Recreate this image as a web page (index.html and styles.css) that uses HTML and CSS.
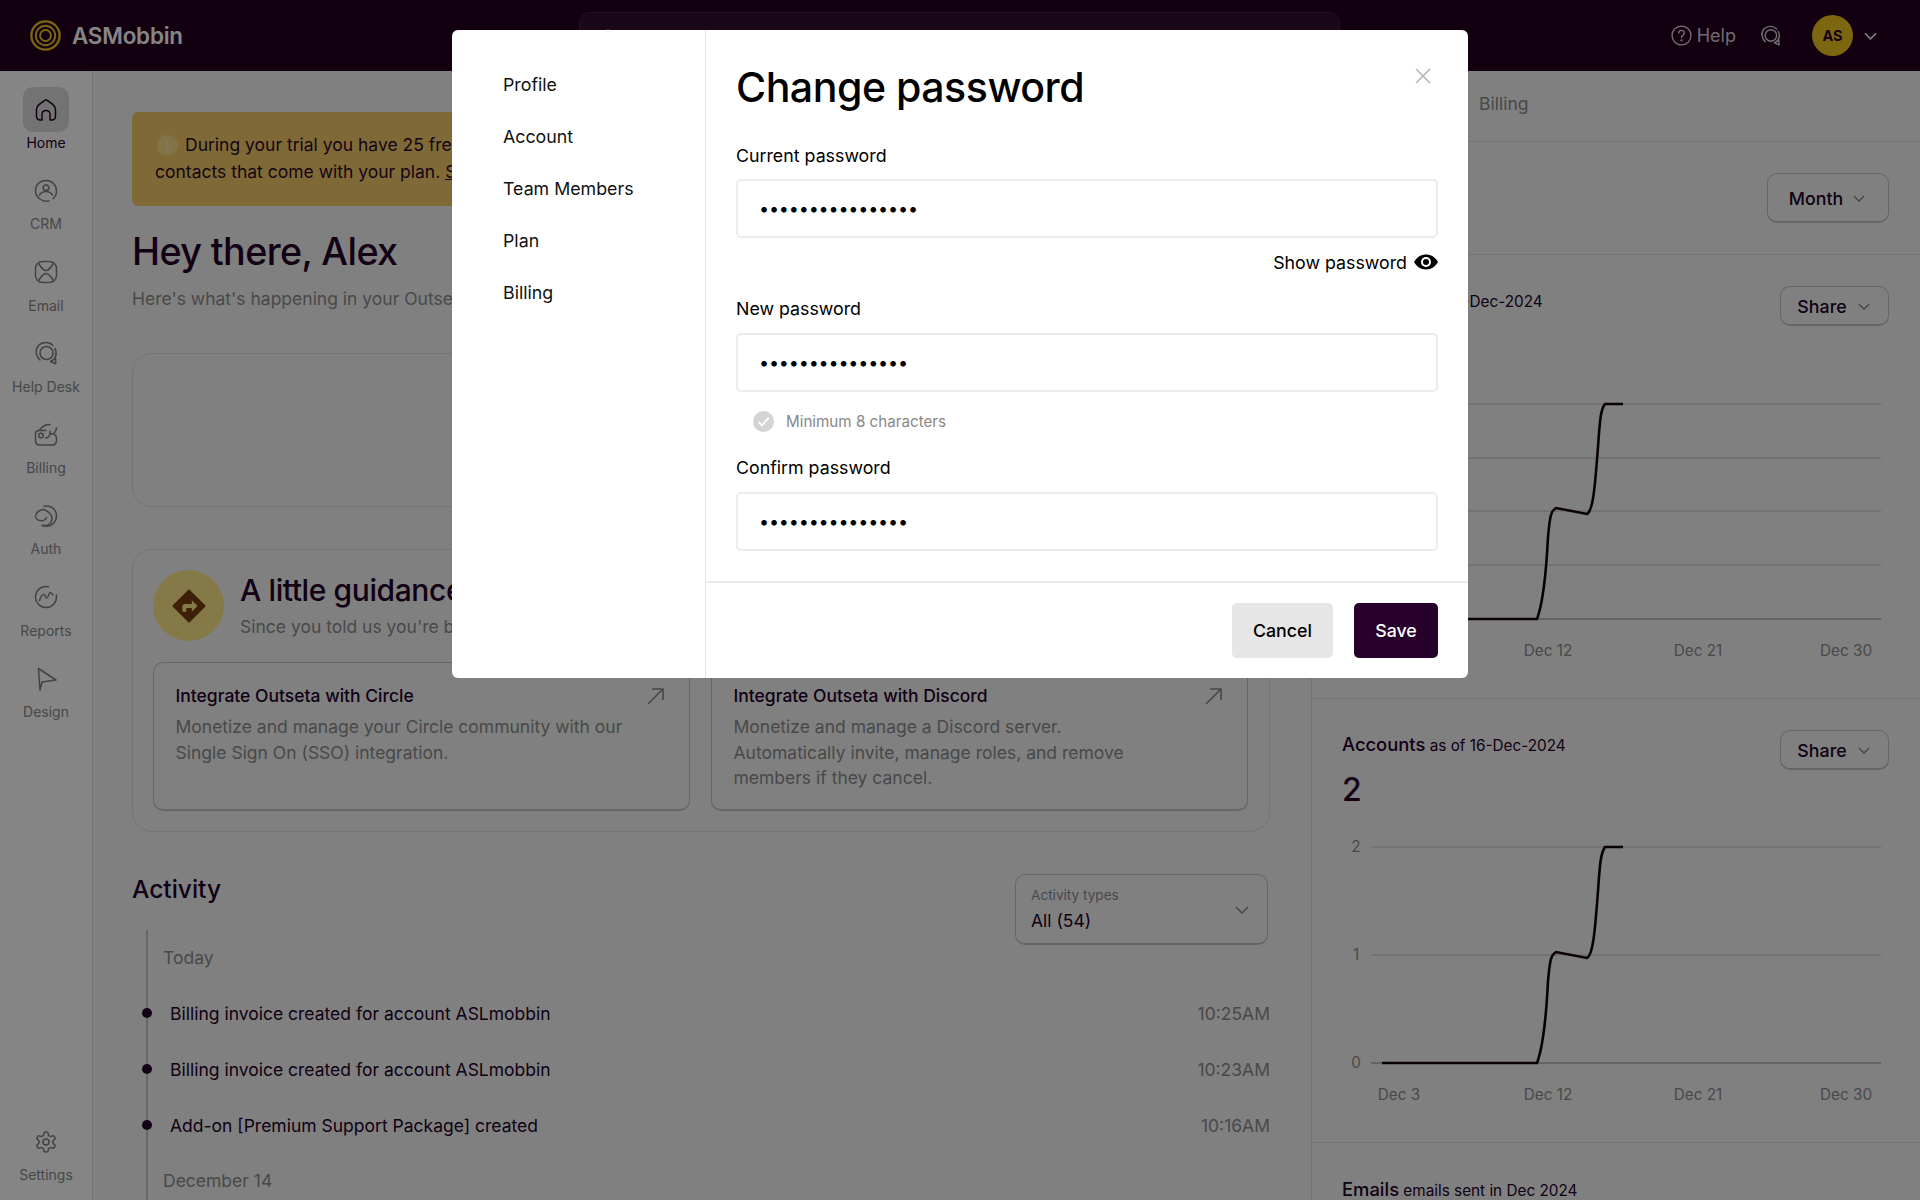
FILE: index.html
```html
<!DOCTYPE html>
<html lang="en">
<head>
<meta charset="utf-8">
<title>ASMobbin - Change password</title>
<link rel="stylesheet" href="styles.css">
</head>
<body>
<div class="app">
  <header class="topbar">
    <div class="brand">
      <svg class="logo" viewBox="0 0 32 32" fill="none" stroke="#f0c31f" stroke-width="2"><circle cx="16" cy="16" r="14.6" stroke-width="2.4"/><circle cx="16" cy="16" r="10"/><circle cx="16" cy="16" r="5.6"/></svg>
      <span class="brand-name">ASMobbin</span>
    </div>
    <div class="search"><svg class="search-icon" viewBox="0 0 24 24" fill="none" stroke="#999" stroke-width="2"><circle cx="11" cy="11" r="7"/><path d="M16 16l5 5"/></svg></div>
    <div class="top-actions">
      <svg class="top-icon" viewBox="0 0 24 24" fill="none" stroke="#fff" stroke-width="1.5"><circle cx="12" cy="12" r="10.8"/><path d="M8.800 9.300a3.200 3.200 0 0 1 6.400.2c0 2.200-3.200 2.500-3.200 4.800" stroke-linecap="round"/><circle cx="12" cy="17.500" r=".6"/></svg>
      <span class="help-text">Help</span>
      <svg class="top-icon chat" viewBox="0 0 24 24" fill="none" stroke="#fff" stroke-width="1.6" stroke-linecap="round" stroke-linejoin="round"><circle cx="12.500" cy="12" r="6.500"/><path d="M6 19C1.500 15 1 8.500 4.500 4.500C8.500 .5 15.500 .8 19 4.500"/><path d="M20.800 7.500C23.500 12 22 18.500 16.500 20.500L21.800 22.800L21.500 17.500"/></svg>
      <span class="avatar">AS</span>
      <svg class="top-chevron" viewBox="0 0 14 8" fill="none" stroke="#fff" stroke-width="1.700"><path d="M1 1l6 6 6-6"/></svg>
    </div>
  </header>

  <div class="workspace">
    <nav class="sidenav">
      <a class="nav-item active"><span class="nav-icon"><svg viewBox="0 0 24 24"><path d="M2.500 18V11.500C2.500 9.500 3.300 8 5 6.700L10 2.800C11.300 1.800 12.700 1.800 14 2.800L19 6.700C20.700 8 21.500 9.500 21.500 11.500V18C21.500 20.500 20 22 17.500 22H16V16.500C16 14 14.300 12.500 12 12.500S8 14 8 16.500V22H6.500C4 22 2.500 20.500 2.500 18Z"/></svg></span><span class="nav-label">Home</span></a>
      <a class="nav-item"><span class="nav-icon"><svg viewBox="0 0 24 24"><path d="M15 22C8.500 23.500 1.500 18.500 1.500 12S6 1.500 12 1.500 22.500 6 22.500 12c0 3-1.300 5.800-3.500 7.700"/><circle cx="12" cy="8.800" r="2.800"/><path d="M5.500 16c1.500-2.500 3.800-3.500 6.500-3.500s5 1 6.500 3.500"/></svg></span><span class="nav-label">CRM</span></a>
      <a class="nav-item"><span class="nav-icon"><svg viewBox="0 0 24 24"><rect x="1.500" y="1.500" width="21" height="21" rx="7"/><path d="M5 4C8 9 10 10.500 12 10.500S16 9 19 4"/><path d="M5 20C8 15 10 13.500 12 13.500S16 15 19 20"/></svg></span><span class="nav-label">Email</span></a>
      <a class="nav-item"><span class="nav-icon"><svg viewBox="0 0 24 24"><circle cx="12.500" cy="12" r="6.500"/><path d="M6 19C1.500 15 1 8.500 4.500 4.500C8.500 .5 15.500 .8 19 4.500"/><path d="M20.800 7.500C23.500 12 22 18.500 16.500 20.500L21.800 22.800L21.500 17.500"/></svg></span><span class="nav-label">Help Desk</span></a>
      <a class="nav-item"><span class="nav-icon"><svg viewBox="0 0 24 24"><path d="M1.500 11C1.500 9 3 7.500 5 7.500h7M20.500 11.500c1.300.7 2 1.800 2 3.500v2.500c0 3-1.800 4.500-4.500 4.500H6c-2.700 0-4.500-1.500-4.500-4.500V11"/><path d="M6 6.500C8.500 3 12 1.500 16 1.500M11.500 15c3.500 0 5-3.500 4.500-7-.3 2 1 3.800 2.500 3.200 2.200-.9 3.500-3.700 4-6.200"/><circle cx="7" cy="12.500" r="2.300"/></svg></span><span class="nav-label">Billing</span></a>
      <a class="nav-item"><span class="nav-icon"><svg viewBox="0 0 24 24"><path d="M10 2.300c6.500-1.800 12.500 3 12.500 9.500 0 6-4.500 10.500-10 10.500-1.700 0-3.200-.4-4.500-1 3.500.6 6 .1 7.800-1.500 2.500-2.300 3-6.300 1-9.300C15 8.500 12.800 6.500 10 5.500"/><path d="M10 5.500C5.500 5.500 1.500 9 1.500 12.300c0 2.500 2.800 4.500 5.800 4.500 2.700 0 4.200-1 5.200-3.300"/></svg></span><span class="nav-label">Auth</span></a>
      <a class="nav-item"><span class="nav-icon"><svg viewBox="0 0 24 24"><path d="M14.500 1.800A10.500 10.500 0 1 0 22.300 10"/><path d="M5.500 15.500C7 11 8.500 9.500 9.800 9.500c1.500 0 1.500 3.500 3 3.500s2-5.500 3.500-5.500c1 0 1.700 1 2.700 2.500"/></svg></span><span class="nav-label">Reports</span></a>
      <a class="nav-item"><span class="nav-icon"><svg viewBox="0 0 24 24"><path d="M4.500 1.500L22 13 8 15 6 23Z"/></svg></span><span class="nav-label">Design</span></a>
      <a class="nav-item settings"><span class="nav-icon"><svg viewBox="0 0 24 24"><path d="M12.220 2h-.44a2 2 0 0 0-2 2v.18a2 2 0 0 1-1 1.730l-.43.25a2 2 0 0 1-2 0l-.15-.08a2 2 0 0 0-2.730.730l-.22.380a2 2 0 0 0 .730 2.730l.15.1a2 2 0 0 1 1 1.720v.51a2 2 0 0 1-1 1.740l-.15.09a2 2 0 0 0-.730 2.730l.22.380a2 2 0 0 0 2.730.730l.15-.08a2 2 0 0 1 2 0l.43.25a2 2 0 0 1 1 1.730V20a2 2 0 0 0 2 2h.44a2 2 0 0 0 2-2v-.18a2 2 0 0 1 1-1.730l.43-.25a2 2 0 0 1 2 0l.15.08a2 2 0 0 0 2.730-.730l.22-.39a2 2 0 0 0-.730-2.730l-.15-.08a2 2 0 0 1-1-1.740v-.5a2 2 0 0 1 1-1.740l.15-.09a2 2 0 0 0 .730-2.730l-.22-.38a2 2 0 0 0-2.730-.730l-.15.08a2 2 0 0 1-2 0l-.43-.25a2 2 0 0 1-1-1.730V4a2 2 0 0 0-2-2z"/><circle cx="12" cy="12" r="3"/></svg></span><span class="nav-label">Settings</span></a>
    </nav>

    <main class="main">
      <div class="banner">
        <svg class="info" viewBox="0 0 22 22"><circle cx="11" cy="11" r="11" fill="#ffdc8a"/><rect x="10" y="9.500" width="2" height="7" fill="#ffe9c0"/><rect x="10" y="6" width="2" height="2" fill="#ffe9c0"/></svg>During your trial you have 25 free contacts, in addition to the<br>contacts that come with your plan. <u>See plans</u>
      </div>
      <h1 class="hello">Hey there, Alex</h1>
      <p class="hello-sub">Here's what's happening in your Outseta account</p>
      <section class="panel empty"></section>
      <section class="panel guidance">
        <div class="guide-head">
          <span class="guide-badge"><svg viewBox="0 0 36 36"><path d="M18 1.500L34.500 18 18 34.500 1.500 18Z" fill="#773f10" stroke="#773f10" stroke-width="2" stroke-linejoin="round"/><path d="M11 24v-5c0-2 1-3 3-3h7v-4l6 6-6 6v-4h-5c-.6 0-1 .4-1 1v3Z" fill="#ffe882"/></svg></span>
          <div>
            <h2 class="guide-title">A little guidance</h2>
            <p class="guide-sub">Since you told us you're building a community</p>
          </div>
        </div>
        <div class="guide-cards">
          <article class="guide-card">
            <svg class="corner-arrow" viewBox="0 0 18 18" fill="none" stroke="#888" stroke-width="1.600"><path d="M2 17L17 2M6 2h11v11"/></svg>
            <h3>Integrate Outseta with Circle</h3>
            <p>Monetize and manage your Circle community with our<br>Single Sign On (SSO) integration.</p>
          </article>
          <article class="guide-card">
            <svg class="corner-arrow" viewBox="0 0 18 18" fill="none" stroke="#888" stroke-width="1.600"><path d="M2 17L17 2M6 2h11v11"/></svg>
            <h3>Integrate Outseta with Discord</h3>
            <p>Monetize and manage a Discord server.<br>Automatically invite, manage roles, and remove<br>members if they cancel.</p>
          </article>
        </div>
      </section>
      <div class="activity-head">
        <h2 class="activity-title">Activity</h2>
        <div class="activity-select">
          <div><div class="select-label">Activity types</div><div class="select-value">All (54)</div></div>
          <svg class="chevron" viewBox="0 0 14 8" fill="none" stroke="#888" stroke-width="1.500"><path d="M1 1l6 6 6-6"/></svg>
        </div>
      </div>
      <div class="timeline">
        <div class="day first">Today</div>
        <div class="event"><span>Billing invoice created for account ASLmobbin</span><time>10:25AM</time></div>
        <div class="event"><span>Billing invoice created for account ASLmobbin</span><time>10:23AM</time></div>
        <div class="event"><span>Add-on [Premium Support Package] created</span><time>10:16AM</time></div>
        <div class="day">December 14</div>
      </div>
    </main>

    <aside class="stats">
      <div class="stat-tabs"><span>Billing</span></div>
      <div class="range-row"><button class="ghost-btn month">Month<svg class="chevron small" viewBox="0 0 14 8" fill="none" stroke="#888" stroke-width="1.500"><path d="M1 1l6 6 6-6"/></svg></button></div>
      <section class="stat">
        <div class="stat-head"><div><strong>People</strong> <span>as of 16-Dec-2024</span></div><button class="ghost-btn">Share<svg class="chevron small" viewBox="0 0 14 8" fill="none" stroke="#888" stroke-width="1.500"><path d="M1 1l6 6 6-6"/></svg></button></div>
        <div class="stat-value">4</div>
        <svg class="chart" viewBox="0 0 547 280">
          <path class="grid" d="M28 17H538M28 71H538M28 124H538M28 178H538"/><path class="grid base" d="M28 232H538"/>
          <path class="line" d="M39 232H194C200 216 203 190 205 150C207 128 208 124 213 121L244 127C250 124 252 100 255 60C257 30 258 22 262 17H280"/>
          <text x="56" y="269">Dec 3</text><text x="205" y="269">Dec 12</text><text x="355" y="269">Dec 21</text><text x="503" y="269">Dec 30</text>
        </svg>
      </section>
      <section class="stat">
        <div class="stat-head"><div><strong>Accounts</strong> <span>as of 16-Dec-2024</span></div><button class="ghost-btn">Share<svg class="chevron small" viewBox="0 0 14 8" fill="none" stroke="#888" stroke-width="1.500"><path d="M1 1l6 6 6-6"/></svg></button></div>
        <div class="stat-value">2</div>
        <svg class="chart" viewBox="0 0 547 280">
          <path class="grid" d="M28 16H538M28 124H538"/><path class="grid base" d="M28 232H538"/>
          <path class="line" d="M39 232H194C200 216 203 190 205 150C207 128 208 124 213 121L244 127C250 124 252 100 255 60C257 30 258 22 262 16H280"/>
          <text x="13" y="21">2</text><text x="13" y="129">1</text><text x="13" y="237">0</text>
          <text x="56" y="269">Dec 3</text><text x="205" y="269">Dec 12</text><text x="355" y="269">Dec 21</text><text x="503" y="269">Dec 30</text>
        </svg>
      </section>
      <section class="stat last">
        <div class="stat-head"><div><strong>Emails</strong> <span>emails sent in Dec 2024</span></div></div>
      </section>
    </aside>
  </div>
</div>

<div class="scrim"></div>
<div class="modal" role="dialog" aria-label="Change password">
  <nav class="modal-nav">
    <a>Profile</a><a>Account</a><a>Team Members</a><a>Plan</a><a>Billing</a>
  </nav>
  <div class="modal-main">
    <div class="modal-body">
      <svg class="close" viewBox="0 0 16 16" fill="none" stroke="#b5b5b5" stroke-width="1.600"><path d="M1 1l14 14M15 1L1 15"/></svg>
      <h2 class="modal-title">Change password</h2>
      <label class="field-label first">Current password</label>
      <input class="field" type="password" value="aaaaaaaaaaaaaaaa">
      <div class="show-row">Show password<svg class="eye" viewBox="0 0 24 16"><path d="M12 .500C6.500.500 2.500 3.500 0 8c2.500 4.500 6.500 7.500 12 7.500S21.500 12.500 24 8C21.500 3.500 17.500.500 12 .500Z"/><circle cx="12" cy="8" r="5" fill="#fff"/><circle cx="12" cy="8" r="3"/></svg></div>
      <label class="field-label">New password</label>
      <input class="field" type="password" value="aaaaaaaaaaaaaaa">
      <div class="hint"><svg class="hint-check" viewBox="0 0 22 22"><circle cx="11" cy="11" r="11" fill="#d4d4d6"/><path d="M6 11.500l3.500 3.500 7-8" fill="none" stroke="#fff" stroke-width="2"/></svg>Minimum 8 characters</div>
      <label class="field-label tight">Confirm password</label>
      <input class="field" type="password" value="aaaaaaaaaaaaaaa">
    </div>
    <div class="modal-foot">
      <button class="btn cancel">Cancel</button>
      <button class="btn save">Save</button>
    </div>
  </div>
</div>
</body>
</html>
```
FILE: styles.css
```css
* { box-sizing: border-box; }
html, body { margin: 0; height: 1200px; overflow: hidden; }
body { font-family: Inter, "Noto Sans", sans-serif; color: #240029; background: #f6f6f6; }
h1, h2, h3, p { margin: 0; }

.app { height: 1200px; display: flex; flex-direction: column; }

.topbar { height: 71px; flex: none; background: #23001f; display: grid; grid-template-columns: 579px 761px 1fr; align-items: start; color: #fff; }
.brand { height: 71px; display: flex; align-items: center; padding-left: 30px; gap: 11px; }
.logo { width: 31px; height: 31px; }
.brand-name { font-size: 22.400px; font-weight: 600; letter-spacing: -.2px; }
.search { margin-top: 12px; height: 48px; border: 1px solid #3c2240; border-radius: 10px; background: #2e102e; padding: 14px 0 0 20px; }
.search-icon { width: 18px; height: 18px; display: block; }
.top-actions { height: 71px; display: flex; align-items: center; justify-content: flex-end; padding-right: 43px; }
.top-icon { width: 21px; height: 21px; opacity: .85; }
.help-text { font-size: 18px; margin-left: 5px; opacity: .8; }
.chat { margin-left: 24px; }
.avatar { width: 41px; height: 41px; border-radius: 50%; background: #f0c31f; color: #23001f; display: flex; align-items: center; justify-content: center; font-size: 14.500px; font-weight: 700; margin-left: 31px; }
.top-chevron { width: 13px; height: 8px; margin-left: 11px; }

.workspace { flex: 1; min-height: 0; display: grid; grid-template-columns: 93px 1219px 1fr; }

.sidenav { background: #fff; border-right: 1px solid #dedede; display: flex; flex-direction: column; align-items: center; padding: 16px 0 15px; }
.nav-item { height: 81.300px; display: flex; flex-direction: column; align-items: center; color: #8a8a8a; font-size: 14px; }
.nav-icon { width: 46px; height: 45px; border-radius: 10px; display: flex; align-items: center; justify-content: center; }
.nav-icon svg { width: 24px; height: 24px; fill: none; stroke: #808080; stroke-width: 1.500; stroke-linecap: round; stroke-linejoin: round; }
.nav-label { line-height: 21px; }
.nav-item.active { color: #23001f; }
.nav-item.active .nav-icon { background: #dcdcde; }
.nav-item.active svg { stroke: #23001f; }
.nav-item.settings { margin-top: auto; height: 65px; }

.main { border-right: 1px solid #dedede; padding: 41px 41px 0 39px; overflow: hidden; }
.banner { height: 94px; border-radius: 6px; background: #f4cc6a; padding: 19px 23px; font-size: 17.500px; line-height: 27px; white-space: nowrap; overflow: hidden; color: #2a0a28; }
.info { width: 21px; height: 21px; vertical-align: -5px; margin: 0 7px 0 2px; }
.hello { font-size: 37.700px; line-height: 48px; font-weight: 500; letter-spacing: -.6px; margin-top: 21px; }
.hello-sub { font-size: 17.500px; line-height: 26px; color: #8c8c8c; margin-top: 11px; }
.panel { border: 1px solid #dedede; border-radius: 20px; margin-top: 42px; }
.hello-sub + .panel { margin-top: 41px; }
.empty { height: 154px; }
.guidance { height: 283px; padding: 20px 20px 0; }
.guide-head { display: flex; gap: 16px; height: 71px; }
.guide-badge { width: 71px; height: 71px; border-radius: 50%; background: #ffe88a; display: flex; align-items: center; justify-content: center; flex: none; }
.guide-badge svg { width: 34px; height: 34px; }
.guide-title { font-size: 30px; line-height: 40px; font-weight: 500; letter-spacing: -.4px; }
.guide-sub { font-size: 17.500px; line-height: 26px; color: #8c8c8c; margin-top: 4px; }
.guide-cards { display: grid; grid-template-columns: 537px 537px; gap: 21px; margin-top: 21px; }
.guide-card { position: relative; height: 149px; border: 1px solid #c4c4c4; border-bottom-width: 2px; border-radius: 10px; padding: 21px 21px 0 21.500px; }
.guide-card h3 { font-size: 17.500px; line-height: 24px; font-weight: 500; }
.guide-card p { font-size: 17.500px; line-height: 25.500px; color: #8c8c8c; margin-top: 6px; }
.corner-arrow { position: absolute; right: 25px; top: 24px; width: 18px; height: 18px; }

.activity-head { height: 56px; margin-top: 42px; display: flex; justify-content: space-between; align-items: flex-start; }
.activity-title { font-size: 24.500px; line-height: 30px; font-weight: 500; }
.activity-select { width: 253px; height: 71px; margin-right: 2px; border: 1px solid #c4c4c4; border-bottom-width: 2px; border-radius: 10px; padding: 14px 18px 12px 15px; display: flex; justify-content: space-between; align-items: center; }
.select-label { font-size: 13.600px; line-height: 18px; color: #8c8c8c; }
.select-value { font-size: 17.500px; line-height: 26px; margin-top: 4px; }
.chevron { width: 14px; height: 8px; }

.timeline { margin-left: 14px; border-left: 2px solid #c8c8c8; }
.day { height: 56px; line-height: 56px; padding-left: 15px; font-size: 17.500px; color: #8c8c8c; }
.day.first { height: 55px; line-height: 26px; padding-top: 15px; }
.event { position: relative; height: 56px; display: flex; justify-content: space-between; align-items: center; padding-left: 22px; font-size: 17.500px; }
.event::before { content: ""; position: absolute; left: -6px; top: 23px; width: 10px; height: 10px; border-radius: 50%; background: #240029; }
.event time { color: #8c8c8c; }

.stats { overflow: hidden; }
.stat-tabs { height: 71px; border-bottom: 1px solid #dedede; padding-left: 167px; font-size: 17.500px; line-height: 66px; color: #8c8c8c; }
.range-row { height: 113px; border-bottom: 1px solid #dedede; display: flex; justify-content: flex-end; align-items: center; padding-right: 31px; }
.ghost-btn { height: 40px; width: 109px; background: transparent; border: 1px solid #c4c4c4; border-bottom-width: 2px; border-radius: 10px; font: 500 17.800px Inter, sans-serif; color: #240029; display: flex; align-items: center; justify-content: center; gap: 11px; padding: 1px 2px 0 0; }
.month { height: 50px; width: 122px; gap: 10px; }
.chevron.small { width: 12px; height: 7px; }
.stat { height: 444px; border-bottom: 1px solid #dedede; padding: 31px 31px 0 30px; }
.stat.last { border-bottom: 0; padding-top: 32px; }
.stat-head { display: flex; justify-content: space-between; align-items: flex-start; height: 40px; font-size: 15.300px; line-height: 28px; }
.stat-head strong { font-size: 18.400px; font-weight: 500; }
.stat-value { height: 40px; font-size: 32px; line-height: 40px; font-weight: 500; }
.chart { display: block; width: 547px; height: 280px; margin: 21px 0 0 1px; }
.grid { stroke: #c4c4c4; stroke-width: 1; fill: none; }
.grid.base { stroke: #8a8a8a; }
.line { fill: none; stroke: #12000f; stroke-width: 2.600; }
.chart text { font: 15.300px Inter, sans-serif; fill: #8c8c8c; text-anchor: middle; }

.scrim { position: fixed; inset: 0; background: rgba(0, 0, 0, .48); }
.modal { position: fixed; left: 452px; top: 30px; width: 1016px; height: 648px; background: #fff; border-radius: 6px; display: flex; color: #000; }
.modal-nav { width: 254px; flex: none; border-right: 1px solid #e3e3e3; padding: 29px 0 0 51px; display: flex; flex-direction: column; }
.modal-nav a { height: 52px; line-height: 52px; font-size: 17.800px; color: #111; }
.modal-main { flex: 1; min-width: 0; display: flex; flex-direction: column; }
.modal-body { position: relative; padding: 30px 30px 0; height: 553px; border-bottom: 2px solid #ececec; }
.close { position: absolute; right: 37px; top: 38px; width: 16px; height: 16px; }
.modal-title { font-size: 41.100px; line-height: 54px; font-weight: 500; letter-spacing: -.5px; }
.field-label { display: block; font-size: 17.800px; line-height: 24px; margin-top: 23px; }
.field-label.first { margin: 30px 0 -1px; }
.field-label.tight { margin-top: 24px; }
.field { display: block; width: 100%; height: 59px; margin-top: 12px; border: 2px solid #ececec; border-radius: 5px; padding: 0 21px; font: 18px Inter, sans-serif; letter-spacing: -.2px; color: #000; outline: 0; background: #fff; }
.show-row { display: flex; justify-content: flex-end; align-items: center; gap: 7px; height: 24px; margin-top: 12px; font-size: 17.800px; }
.eye { width: 24px; height: 16px; }
.hint { display: flex; align-items: center; gap: 12px; height: 22px; margin: 18px 0 0 17px; font-size: 15.200px; color: #888; }
.hint-check { width: 21px; height: 21px; }
.modal-foot { flex: 1; display: flex; justify-content: flex-end; gap: 21px; padding: 20px 30px 0; }
.btn { height: 55px; border: 0; border-radius: 5px; font: 500 17.800px Inter, sans-serif; }
.cancel { width: 101px; background: #e6e6e6; color: #000; }
.save { width: 84px; background: #27002b; color: #fff; }
```
